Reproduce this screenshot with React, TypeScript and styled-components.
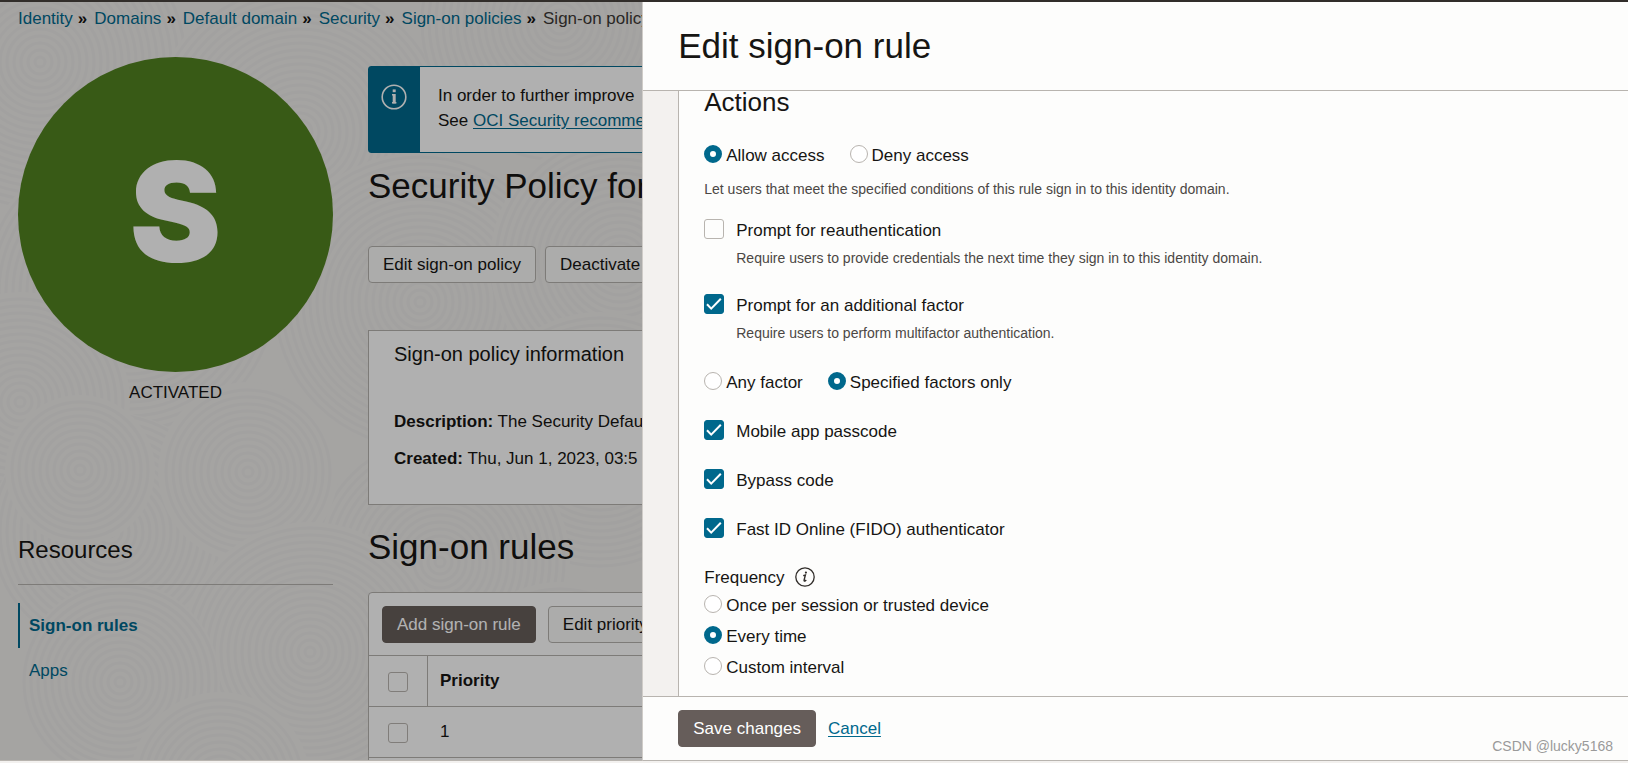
import React, { useId, useState } from "react";
import styled, { createGlobalStyle } from "styled-components";

const teal = "#00688c";
const line = "#b8b4af";
const paper = "#fdfdfc";

const GlobalStyle = createGlobalStyle`
  * { box-sizing: border-box; }
  body {
    margin: 0;
    background: #f3f1ef;
    color: #161513;
    font: 17px/22px "Liberation Sans", Arial, sans-serif;
  }
  h1, h2, h3, p, ul, ol { margin: 0; padding: 0; font-weight: 400; }
  button, input { font: inherit; margin: 0; }
`;

const Shell = styled.div`
  position: relative;
  height: 100vh;
  display: flex;
  flex-direction: column;
  overflow: hidden;
  border-top: 2px solid #312d2a;
  border-bottom: 2px solid #f3f1ef;
`;

const Page = styled.div`
  position: relative;
  flex: 1;
  min-height: 0;
  overflow: hidden;
  padding: 0 18px;
  background: #ecebe9;
  border-bottom: 1px solid ${line};
`;

const Texture = styled.svg`
  position: absolute;
  inset: 0;
  width: 100%;
  height: 100%;
`;

const Scrim = styled.div`
  position: absolute;
  inset: 0;
  background: rgba(0, 0, 0, 0.3);
`;

const Crumbs = styled.ol`
  position: relative;
  display: flex;
  list-style: none;
  white-space: nowrap;
  padding: 6px 0 27px;
  color: #3c3835;
`;

const Separator = styled.span`
  margin: 0 7px 0 5px;
  font-weight: 700;
  color: #161513;
`;

const Link = styled.a<{ $underline?: boolean }>`
  color: ${teal};
  text-decoration: ${(p) => (p.$underline ? "underline" : "none")};
  text-underline-offset: 2px;
`;

const Columns = styled.div`
  position: relative;
  display: grid;
  grid-template-columns: 315px minmax(0, 1fr);
  column-gap: 35px;
`;

const Avatar = styled.div`
  display: grid;
  place-items: center;
  width: 100%;
  aspect-ratio: 1;
  padding-bottom: 5px;
  border-radius: 50%;
  background: #518120;
  color: ${paper};
  font: 900 138px/138px Inter, "Liberation Sans", sans-serif;
`;

const Status = styled.p`
  margin-top: 10px;
  text-align: center;
`;

const SideTitle = styled.h2`
  margin-top: 127px;
  padding: 5px 0 20px;
  font-size: 24px;
  line-height: 28px;
  border-bottom: 1px solid #b3b0ad;
`;

const SideNav = styled.nav`
  display: flex;
  flex-direction: column;
  margin-top: 18px;
`;

const SideLink = styled.a<{ $active?: boolean }>`
  padding-left: 9px;
  line-height: 45px;
  color: ${teal};
  text-decoration: none;
  font-weight: ${(p) => (p.$active ? 700 : 400)};
  border-left: 2px solid ${(p) => (p.$active ? teal : "transparent")};
`;

const Content = styled.main`
  padding-top: 9px;
  white-space: nowrap;
`;

const Alert = styled.div`
  display: flex;
  min-height: 87px;
  border: 1px solid ${teal};
  border-radius: 3px;
  background: ${paper};
  line-height: 25px;
`;

const AlertIcon = styled.div`
  width: 51px;
  padding: 17px 12px;
  background: ${teal};
  svg { display: block; }
`;

const AlertText = styled.p`
  padding: 16px 18px;
`;

const Heading = styled.h1`
  font-size: 35px;
  line-height: 40px;
  margin: 13px 0 40px;
`;

const TableHeading = styled.h2`
  font-size: 35px;
  line-height: 40px;
  margin: 22px 0 25px;
`;

const ButtonRow = styled.div<{ $gap: number }>`
  display: flex;
  gap: ${(p) => p.$gap}px;
`;

const Button = styled.button<{ $primary?: boolean }>`
  height: 37px;
  padding: 0 14px;
  border: 1px solid ${(p) => (p.$primary ? "#665d5a" : "#b3b0ad")};
  border-radius: 4px;
  background: ${(p) => (p.$primary ? "#665d5a" : "#f7f7f5")};
  color: ${(p) => (p.$primary ? "#ffffff" : "#161513")};
  white-space: nowrap;
`;

const InfoCard = styled.section`
  margin-top: 47px;
  height: 175px;
  padding: 12px 25px;
  border: 1px solid #b3b0ad;
  background: ${paper};
`;

const CardTitle = styled.h3`
  font-size: 20px;
  margin-bottom: 46px;
`;

const Fact = styled.p`
  margin-bottom: 15px;
`;

const TableBox = styled.section`
  border: 1px solid #b3b0ad;
  border-radius: 4px;
  background: ${paper};
`;

const Toolbar = styled.div`
  padding: 13px;
  padding-bottom: 12px;
`;

const Table = styled.table`
  width: 100%;
  border-collapse: separate;
  border-spacing: 0;
  text-align: left;
`;

const Cell = styled.td<{ $tick?: boolean; $rule?: boolean }>`
  height: 51px;
  width: ${(p) => (p.$tick ? "58px" : "auto")};
  padding: ${(p) => (p.$tick ? "1px 0 0 19px" : "0 12px")};
  border-top: 1px solid #b3b0ad;
  border-left: ${(p) => (p.$rule ? "1px solid #b3b0ad" : "0")};
  border-right: 0;
`;

const Indent = styled(Cell)`
  padding-left: 13px;
`;

const TableFooter = styled.div`
  height: 51px;
  border-top: 1px solid #b3b0ad;
`;

const Drawer = styled.aside`
  position: absolute;
  top: 0;
  right: 0;
  bottom: 0;
  width: 60.55%;
  display: flex;
  flex-direction: column;
  background: ${paper};
  border-left: 1px solid #cfccc8;
  border-bottom: 1px solid ${line};
`;

const DrawerHeader = styled.header`
  flex: none;
  padding: 23px 35px;
  border-bottom: 1px solid ${line};
  h2 {
    font-size: 35px;
    line-height: 42px;
  }
`;

const DrawerBody = styled.div`
  flex: 1;
  min-height: 0;
  overflow: hidden;
  padding-left: 35px;
  background: #f3f1ef;
`;

const RuleForm = styled.form`
  height: 100%;
  padding: 0 25px;
  background: ${paper};
  border-left: 1px solid ${line};
`;

const DrawerFooter = styled.footer`
  flex: none;
  display: flex;
  align-items: center;
  gap: 12px;
  padding: 13px 35px;
  border-top: 1px solid ${line};
`;

const FormTitle = styled.h3`
  font-size: 26px;
  margin-bottom: 32px;
`;

const RadioRow = styled.div`
  display: flex;
  gap: 25px;
`;

const Hint = styled.p<{ $indent?: boolean }>`
  font-size: 14px;
  line-height: 20px;
  color: #4b4744;
  padding-left: ${(p) => (p.$indent ? "32px" : "0")};
  margin-top: ${(p) => (p.$indent ? "5px" : "12px")};
`;

const Field = styled.div<{ $top: number }>`
  margin-top: ${(p) => p.$top}px;
`;

const Choice = styled.label<{ $box?: boolean }>`
  display: flex;
  align-items: flex-start;
  gap: ${(p) => (p.$box ? 12 : 4)}px;
  line-height: ${(p) => (p.$box ? 24 : 22)}px;
`;

const RadioInput = styled.input`
  appearance: none;
  flex: none;
  width: 18px;
  height: 18px;
  border: 1px solid ${line};
  border-radius: 50%;
  background: #ffffff;
  &:checked { border: 6px solid ${teal}; }
`;

const TickBox = styled.span`
  display: grid;
  flex: none;
  width: 20px;
  height: 20px;
  > * { grid-area: 1 / 1; }
  svg { pointer-events: none; }
`;

const TickInput = styled.input`
  appearance: none;
  width: 20px;
  height: 20px;
  border: 1px solid ${line};
  border-radius: 3px;
  background: ${paper};
  &:checked { background: ${teal}; border-color: ${teal}; }
`;

const FrequencyLabel = styled.div`
  display: flex;
  gap: 10px;
  margin-top: 25px;
`;

const RadioStack = styled.div`
  display: flex;
  flex-direction: column;
  gap: 9px;
  margin-top: 6px;
`;

const Watermark = styled.span`
  position: absolute;
  right: 15px;
  bottom: 3px;
  font-size: 14px;
  color: #9a9a9a;
`;

const rings = [
  [40, 60, 150], [300, 130, 150], [560, 20, 140], [130, 290, 150],
  [420, 300, 150], [620, 260, 130], [20, 400, 110], [600, 440, 130],
  [440, 560, 130], [110, 530, 120], [80, 468, 75], [248, 470, 90],
  [310, 650, 130], [120, 680, 100], [560, 690, 110], [220, 780, 90],
];

function Background() {
  return (
    <Texture aria-hidden="true">
      {rings.map(([x, y, r]) => (
        <g key={`${x}-${y}`} fill="none" stroke="#e9e7e5" strokeWidth="3">
          <circle cx={x} cy={y} r={r} fill="#ecebe9" stroke="none" />
          {Array.from({ length: Math.floor(r / 7) }, (_, i) => (
            <circle key={i} cx={x} cy={y} r={(i + 1) * 7 - 2} />
          ))}
        </g>
      ))}
    </Texture>
  );
}

function Tick({ checked = false, label }: { checked?: boolean; label?: string }) {
  const [on, setOn] = useState(checked);
  return (
    <TickBox>
      <TickInput type="checkbox" aria-label={label} checked={on} onChange={() => setOn(!on)} />
      {on && (
        <svg width="20" height="20" viewBox="0 0 20 20" fill="none" stroke="#fff" strokeWidth="2" aria-hidden="true">
          <path d="M3 10.2 7.2 14.6 16.8 4.8" />
        </svg>
      )}
    </TickBox>
  );
}

function Check({ label, hint, checked, top }: { label: string; hint?: string; checked?: boolean; top: number }) {
  return (
    <Field $top={top}>
      <Choice $box>
        <Tick checked={checked} />
        <span>{label}</span>
      </Choice>
      {hint && <Hint $indent>{hint}</Hint>}
    </Field>
  );
}

function Radios({ options, initial }: { options: string[]; initial: string }) {
  const name = useId();
  const [value, setValue] = useState(initial);
  return (
    <>
      {options.map((o) => (
        <Choice key={o}>
          <RadioInput type="radio" name={name} checked={value === o} onChange={() => setValue(o)} />
          <span>{o}</span>
        </Choice>
      ))}
    </>
  );
}

const trail = ["Identity", "Domains", "Default domain", "Security", "Sign-on policies"];

export default function App() {
  return (
    <Shell>
      <GlobalStyle />
      <Page>
        <Background />
        <Crumbs>
          {trail.map((t) => (
            <li key={t}>
              <Link href="#">{t}</Link>
              <Separator aria-hidden="true">»</Separator>
            </li>
          ))}
          <li>Sign-on policy details</li>
        </Crumbs>
        <Columns>
          <div>
            <Avatar>S</Avatar>
            <Status>ACTIVATED</Status>
            <SideTitle>Resources</SideTitle>
            <SideNav>
              <SideLink href="#" $active>Sign-on rules</SideLink>
              <SideLink href="#">Apps</SideLink>
            </SideNav>
          </div>
          <Content>
            <Alert>
              <AlertIcon>
                <svg width="26" height="26" viewBox="0 0 26 26" fill="none" stroke="#fdfdfc" aria-hidden="true">
                  <circle cx="13" cy="13" r="11.8" strokeWidth="1.6" />
                  <path d="M13 10V19.4M11 10.8H13M11 18.8H15.4" strokeWidth="1.4" />
                  <path d="M13.2 10V19.4" strokeWidth="3" />
                  <path d="M13.2 5.4V8.2" strokeWidth="3" />
                </svg>
              </AlertIcon>
              <AlertText>
                In order to further improve
                <br />
                See <Link href="#" $underline>OCI Security recommendations</Link>
              </AlertText>
            </Alert>
            <Heading>Security Policy for</Heading>
            <ButtonRow $gap={9}>
              <Button>Edit sign-on policy</Button>
              <Button>Deactivate</Button>
            </ButtonRow>
            <InfoCard>
              <CardTitle>Sign-on policy information</CardTitle>
              <Fact><b>Description:</b> The Security Default</Fact>
              <Fact><b>Created:</b> Thu, Jun 1, 2023, 03:5</Fact>
            </InfoCard>
            <TableHeading>Sign-on rules</TableHeading>
            <TableBox>
              <Toolbar>
                <ButtonRow $gap={12}>
                  <Button $primary>Add sign-on rule</Button>
                  <Button>Edit priority</Button>
                </ButtonRow>
              </Toolbar>
              <Table>
                <thead>
                  <tr>
                    <Cell as="th" $tick><Tick label="Select all rules" /></Cell>
                    <Cell as="th" $rule>Priority</Cell>
                  </tr>
                </thead>
                <tbody>
                  <tr>
                    <Cell $tick><Tick label="Select rule 1" /></Cell>
                    <Indent>1</Indent>
                  </tr>
                </tbody>
              </Table>
              <TableFooter />
            </TableBox>
          </Content>
        </Columns>
        <Scrim />
      </Page>
      <Drawer role="dialog" aria-label="Edit sign-on rule">
        <DrawerHeader>
          <h2>Edit sign-on rule</h2>
        </DrawerHeader>
        <DrawerBody>
          <RuleForm>
            <FormTitle>Actions</FormTitle>
            <RadioRow>
              <Radios options={["Allow access", "Deny access"]} initial="Allow access" />
            </RadioRow>
            <Hint>Let users that meet the specified conditions of this rule sign in to this identity domain.</Hint>
            <Check
              top={20}
              label="Prompt for reauthentication"
              hint="Require users to provide credentials the next time they sign in to this identity domain."
            />
            <Check
              top={26}
              checked
              label="Prompt for an additional factor"
              hint="Require users to perform multifactor authentication."
            />
            <Field $top={29}>
              <RadioRow>
                <Radios options={["Any factor", "Specified factors only"]} initial="Specified factors only" />
              </RadioRow>
            </Field>
            <Check top={26} checked label="Mobile app passcode" />
            <Check top={25} checked label="Bypass code" />
            <Check top={25} checked label="Fast ID Online (FIDO) authenticator" />
            <FrequencyLabel>
              Frequency
              <svg width="20" height="20" viewBox="0 0 20 20" fill="none" stroke="#312d2a" aria-hidden="true">
                <circle cx="10" cy="10" r="9.2" strokeWidth="1.3" />
                <path d="M8.2 8.6 10.4 8 9.1 13.2Q8.9 14.4 10 14 10.7 13.7 11.2 12.9" strokeWidth="1.4" />
                <circle cx="10.9" cy="5.6" r="1.1" fill="#312d2a" stroke="none" />
              </svg>
            </FrequencyLabel>
            <RadioStack>
              <Radios
                options={["Once per session or trusted device", "Every time", "Custom interval"]}
                initial="Every time"
              />
            </RadioStack>
          </RuleForm>
        </DrawerBody>
        <DrawerFooter>
          <Button $primary>Save changes</Button>
          <Link href="#" $underline>Cancel</Link>
        </DrawerFooter>
        <Watermark>CSDN @lucky5168</Watermark>
      </Drawer>
    </Shell>
  );
}
